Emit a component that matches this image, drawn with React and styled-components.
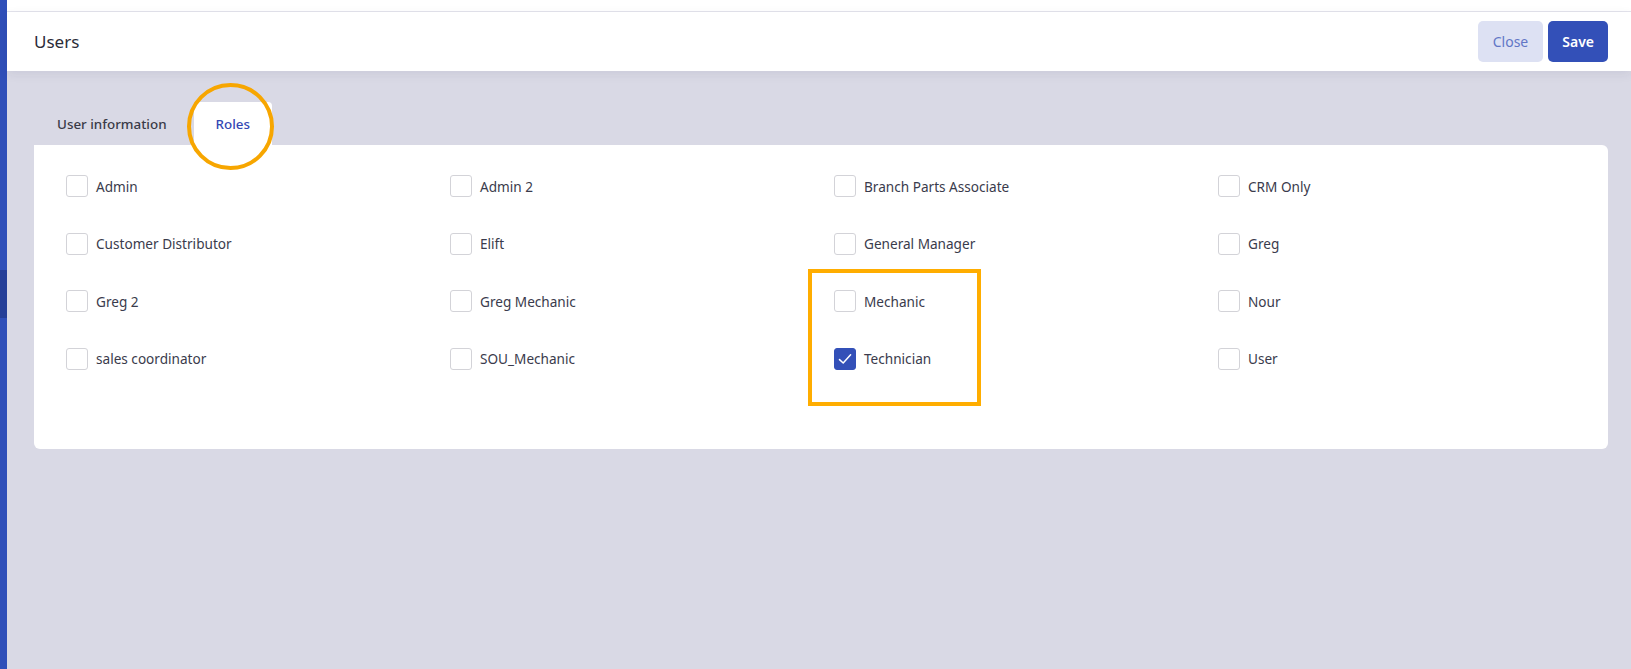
import styled, { createGlobalStyle } from "styled-components";

const GlobalStyle = createGlobalStyle`
  html, body {
    margin: 0;
    padding: 0;
    height: 100%;
  }
  body {
    font-family: "Noto Sans", "Open Sans", sans-serif;
    color: #2f3040;
    background: #d9d9e5;
  }
  #root {
    height: 100%;
  }
`;

const Shell = styled.div`
  display: flex;
  height: 100vh;
  overflow: hidden;
`;

const SideStrip = styled.div`
  width: 7px;
  flex-shrink: 0;
  background: linear-gradient(
    to bottom,
    #2f4fb9 0px,
    #2f4fb9 270px,
    #253f98 270px,
    #253f98 318px,
    #2f4fb9 318px
  );
`;

const Main = styled.div`
  flex: 1;
  display: flex;
  flex-direction: column;
  background: #d9d9e5;
`;

const TopGap = styled.div`
  height: 11px;
  background: #ffffff;
  border-bottom: 1px solid #e4e4ec;
`;

const Header = styled.div`
  height: 59px;
  display: flex;
  align-items: center;
  justify-content: space-between;
  padding: 0 23px 0 27px;
  background: #ffffff;
  box-shadow: 0 3px 10px rgba(40, 40, 80, 0.08);
  position: relative;
  z-index: 1;
`;

const Title = styled.h1`
  margin: 0;
  font-size: 17px;
  font-weight: 400;
  color: #2b2c38;
`;

const Actions = styled.div`
  display: flex;
  gap: 5px;
`;

const Button = styled.button`
  height: 41px;
  padding: 0 ${(p) => (p.$primary ? "14px" : "15px")};
  border: none;
  border-radius: 5px;
  font-family: inherit;
  font-size: 14px;
  font-weight: ${(p) => (p.$primary ? 600 : 400)};
  background: ${(p) => (p.$primary ? "#3350b8" : "#dde1f3")};
  color: ${(p) => (p.$primary ? "#ffffff" : "#6276c6")};
  cursor: pointer;
`;

const Body = styled.div`
  flex: 1;
  padding: 31px 23px 0 27px;
  position: relative;
`;

const Tabs = styled.div`
  display: flex;
  gap: 4px;
`;

const Tab = styled.div`
  height: 43px;
  display: flex;
  align-items: center;
  padding: 0 ${(p) => (p.$active ? "22px" : "23px")};
  font-size: 13.4px;
  font-weight: 500;
  color: ${(p) => (p.$active ? "#3548b4" : "#3a3b48")};
  background: ${(p) => (p.$active ? "#ffffff" : "transparent")};
  border-radius: 4px 4px 0 0;
`;

const Card = styled.div`
  background: #ffffff;
  border-radius: 0 6px 6px 6px;
  padding: 30px 6px 79px 32px;
  display: grid;
  grid-template-columns: repeat(4, 1fr);
  row-gap: 35.5px;
`;

const Option = styled.label`
  display: flex;
  align-items: center;
  gap: 8px;
  height: 22px;
  font-size: 13.6px;
  color: #3a3b4c;
`;

const Box = styled.span`
  width: 22px;
  height: 22px;
  box-sizing: border-box;
  border-radius: 3px;
  border: 1px solid ${(p) => (p.$checked ? "#3350b8" : "#d3d3d8")};
  background: ${(p) => (p.$checked ? "#3350b8" : "#ffffff")};
  display: flex;
  align-items: center;
  justify-content: center;
  flex-shrink: 0;
`;

const Circle = styled.div`
  position: absolute;
  left: 180px;
  top: 12px;
  width: 79px;
  height: 79px;
  border: 4px solid #f7a600;
  border-radius: 50%;
  pointer-events: none;
`;

const Highlight = styled.div`
  position: absolute;
  left: 801px;
  top: 198px;
  width: 165px;
  height: 129px;
  border: 4px solid #ffad00;
  pointer-events: none;
`;

const roles = [
  ["Admin", false],
  ["Admin 2", false],
  ["Branch Parts Associate", false],
  ["CRM Only", false],
  ["Customer Distributor", false],
  ["Elift", false],
  ["General Manager", false],
  ["Greg", false],
  ["Greg 2", false],
  ["Greg Mechanic", false],
  ["Mechanic", false],
  ["Nour", false],
  ["sales coordinator", false],
  ["SOU_Mechanic", false],
  ["Technician", true],
  ["User", false],
];

function Check() {
  return (
    <svg width="16" height="16" viewBox="0 0 16 16" fill="none">
      <path
        d="M2.5 8.6 L6.2 12 L13.6 3.8"
        stroke="#ffffff"
        strokeWidth="1.5"
        strokeLinecap="round"
        strokeLinejoin="round"
      />
    </svg>
  );
}

export default function App() {
  return (
    <>
      <GlobalStyle />
      <Shell>
        <SideStrip />
        <Main>
          <TopGap />
          <Header>
            <Title>Users</Title>
            <Actions>
              <Button>Close</Button>
              <Button $primary>Save</Button>
            </Actions>
          </Header>
          <Body>
            <Tabs>
              <Tab>User information</Tab>
              <Tab $active>Roles</Tab>
            </Tabs>
            <Card>
              {roles.map(([name, checked]) => (
                <Option key={name}>
                  <Box $checked={checked}>{checked && <Check />}</Box>
                  {name}
                </Option>
              ))}
            </Card>
            <Circle />
            <Highlight />
          </Body>
        </Main>
      </Shell>
    </>
  );
}
